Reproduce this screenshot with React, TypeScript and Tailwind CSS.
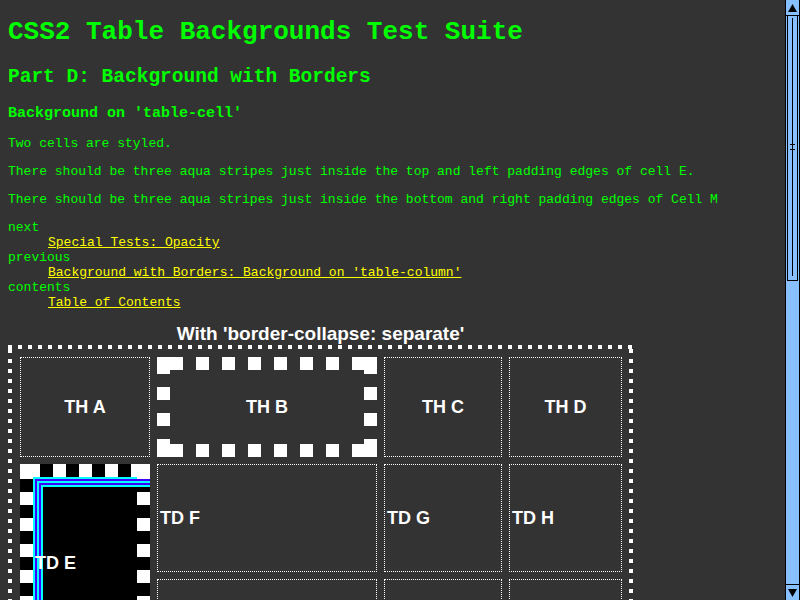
import React from "react";

function BBorder() {
  const xs: [number, number][] = [
    [0, 26], [39, 52], [65, 78], [91, 104], [117, 130], [143, 156], [169, 182], [195, 220],
  ];
  const ys: [number, number][] = [[0, 17], [30, 43], [56, 69], [82, 100]];
  return (
    <svg className="absolute inset-0" width="220" height="100" viewBox="0 0 220 100">
      {xs.map(([a, b]) => (
        <rect key={"t" + a} x={a} y={0} width={b - a} height={13} fill="#fff" />
      ))}
      {xs.map(([a, b]) => (
        <rect key={"b" + a} x={a} y={87} width={b - a} height={13} fill="#fff" />
      ))}
      {ys.map(([a, b]) => (
        <rect key={"l" + a} x={0} y={a} width={13} height={b - a} fill="#fff" />
      ))}
      {ys.map(([a, b]) => (
        <rect key={"r" + a} x={207} y={a} width={13} height={b - a} fill="#fff" />
      ))}
    </svg>
  );
}

function EBorder() {
  const W = 130;
  const H = 223;
  const stripes = [0, 1, 2, 3, 4];
  const top: [number, number][] = [[0, 20], [33, 46], [59, 72], [85, 98], [111, 130]];
  const col: [number, number][] = [[0, 15]];
  for (let y = 28; y < H; y += 26) col.push([y, Math.min(y + 13, H)]);
  return (
    <svg className="absolute inset-0" width={W} height={H} viewBox={`0 0 ${W} ${H}`}>
      <rect x={0} y={0} width={W} height={H} fill="#000" />
      {stripes.map((i) => {
        const o = 13 + 2 * i;
        const c = i % 2 === 0 ? "#00ffff" : "#4000ff";
        return (
          <g key={i}>
            <rect x={o} y={o} width={W - o} height={2} fill={c} />
            <rect x={o} y={o} width={2} height={H - o} fill={c} />
          </g>
        );
      })}
      {top.map(([a, b]) => (
        <rect key={"t" + a} x={a} y={0} width={b - a} height={13} fill="#fff" />
      ))}
      {col.map(([a, b]) => (
        <rect key={"l" + a} x={0} y={a} width={13} height={b - a} fill="#fff" />
      ))}
      {col.map(([a, b]) => (
        <rect key={"r" + a} x={117} y={a} width={13} height={b - a} fill="#fff" />
      ))}
    </svg>
  );
}

function Scrollbar() {
  return (
    <div className="w-[15px] h-[600px] shrink-0 bg-[#88c0ff] border-x border-black flex flex-col">
      <div className="h-[16px] border-b border-black flex items-start justify-center pt-[4px]">
        <svg width="9" height="8" viewBox="0 0 9 8">
          <polygon points="4.5,0 9,8 0,8" fill="#000" />
        </svg>
      </div>
      <div className="relative h-[265px] mx-[1px] border-x border-b border-black">
        <div className="absolute left-[4px] top-[2px] bottom-[4px] w-[1px] bg-black" />
        <div className="absolute left-[2px] top-[128px] w-[5px] h-[1px] bg-black" />
        <div className="absolute left-[2px] top-[133px] w-[5px] h-[1px] bg-black" />
      </div>
      <div className="flex-1" />
      <div className="h-[16px] border-t border-black flex items-end justify-center pb-[3px]">
        <svg width="9" height="8" viewBox="0 0 9 8">
          <polygon points="0,0 9,0 4.5,8" fill="#000" />
        </svg>
      </div>
    </div>
  );
}

export default function App() {
  const cell = "border border-dotted border-white";
  const th = "flex items-center justify-center text-white font-bold text-[18px] leading-[21px] font-['Liberation_Sans',Arial,sans-serif]";
  const td = "flex items-center pl-[2px] text-white font-bold text-[18px] leading-[21px] font-['Liberation_Sans',Arial,sans-serif]";
  return (
    <div className="w-[800px] h-[600px] overflow-hidden flex bg-[#333333]">
      <div className="flex-1 h-[600px] overflow-hidden pl-[8px] text-[#00ff00] font-['Liberation_Mono','Courier_New',monospace]">
        <h1 className="mt-[17px] text-[26px] leading-[30px] font-bold whitespace-nowrap">
          CSS2 Table Backgrounds Test Suite
        </h1>
        <h2 className="mt-[18px] text-[19.5px] leading-[24px] font-bold whitespace-nowrap">
          Part D: Background with Borders
        </h2>
        <h3 className="mt-[16px] text-[15px] leading-[18px] font-bold whitespace-nowrap">
          Background on 'table-cell'
        </h3>
        <p className="mt-[13px] text-[13px] leading-[15px] whitespace-nowrap">Two cells are styled.</p>
        <p className="mt-[13px] text-[13px] leading-[15px] whitespace-nowrap">
          There should be three aqua stripes just inside the top and left padding edges of cell E.
        </p>
        <p className="mt-[13px] text-[13px] leading-[15px] whitespace-nowrap">
          There should be three aqua stripes just inside the bottom and right padding edges of Cell M
        </p>
        <dl className="mt-[13px] text-[13px] leading-[15px] whitespace-nowrap">
          <dt>next</dt>
          <dd className="ml-[40px]">
            <a className="text-[#ffff00] underline">Special Tests: Opacity</a>
          </dd>
          <dt>previous</dt>
          <dd className="ml-[40px]">
            <a className="text-[#ffff00] underline">Background with Borders: Background on 'table-column'</a>
          </dd>
          <dt>contents</dt>
          <dd className="ml-[40px]">
            <a className="text-[#ffff00] underline">Table of Contents</a>
          </dd>
        </dl>
        <div className="mt-[12px] w-[625px] text-center text-white font-bold text-[19px] leading-[23px] font-['Liberation_Sans',Arial,sans-serif] whitespace-nowrap">
          With 'border-collapse: separate'
        </div>
        <div className="w-[625px] pt-[12px] pl-[12px] pr-[11px] pb-[11px] bg-no-repeat [background-image:repeating-linear-gradient(90deg,#fff_0_4px,transparent_4px_10px),repeating-linear-gradient(90deg,#fff_0_4px,transparent_4px_10px),repeating-linear-gradient(180deg,#fff_0_4px,transparent_4px_10px),repeating-linear-gradient(180deg,#fff_0_4px,transparent_4px_10px)] [background-size:100%_4px,100%_4px,4px_100%,4px_100%] [background-position:0_0,0_100%,0_4px,100%_4px]">
          <div className="grid grid-cols-[130px_220px_118px_113px] grid-rows-[100px_108px_108px] gap-[7px]">
            <div className={`${cell} ${th}`}>TH A</div>
            <div className={`relative ${th}`}>
              <BBorder />
              <span className="relative">TH B</span>
            </div>
            <div className={`${cell} ${th}`}>TH C</div>
            <div className={`${cell} ${th}`}>TH D</div>
            <div className="relative row-span-2 pl-[15px] pt-[89px] text-white font-bold text-[18px] leading-[21px] font-['Liberation_Sans',Arial,sans-serif]">
              <EBorder />
              <span className="relative">TD E</span>
            </div>
            <div className={`${cell} ${td}`}>TD F</div>
            <div className={`${cell} ${td}`}>TD G</div>
            <div className={`${cell} ${td}`}>TD H</div>
            <div className={`${cell} ${td}`}></div>
            <div className={`${cell} ${td}`}></div>
            <div className={`${cell} ${td}`}></div>
          </div>
        </div>
      </div>
      <Scrollbar />
    </div>
  );
}
